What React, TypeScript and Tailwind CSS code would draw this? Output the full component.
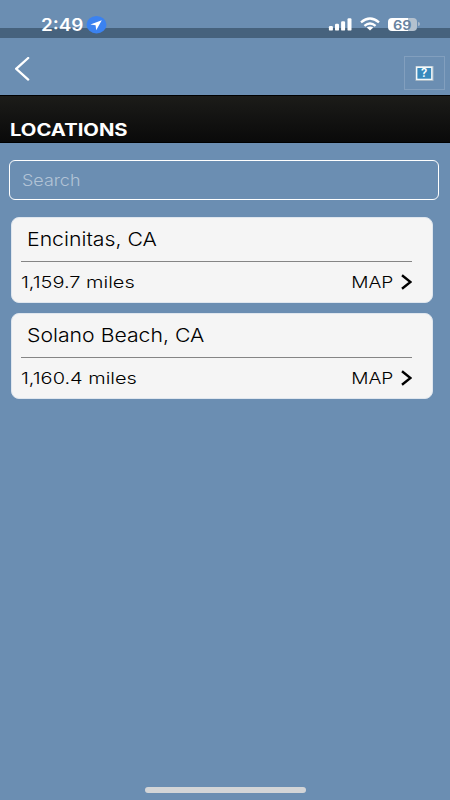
const locations = [
  { name: "Encinitas, CA", distance: "1,159.7 miles" },
  { name: "Solano Beach, CA", distance: "1,160.4 miles" },
];

function StatusBar() {
  return (
    <div className="flex h-[38px] items-start justify-between bg-[linear-gradient(to_bottom,#6b8eb2_28px,#46627d_28px)] pr-[30px] pl-[41px]">
      <div className="flex pt-[15px]">
        <span className="w-[45px] origin-left scale-x-[1.11] text-[17px] leading-[20px] font-semibold text-white">
          2:49
        </span>
        <svg width="21" height="18" viewBox="0 0 21 18" className="mt-px">
          <ellipse cx="10.5" cy="8.7" rx="10" ry="8.7" fill="#3b82f0" />
          <path d="M15.8 4.2 4.4 8.6l5.2.7.6 5z" fill="#fff" />
        </svg>
      </div>

      <div className="flex pt-[17px]">
        <svg width="24" height="14" viewBox="0 0 24 14" fill="#fff">
          <rect x="0.9" y="9" width="4" height="4.6" rx="1.2" />
          <rect x="7" y="6.7" width="4" height="6.9" rx="1.2" />
          <rect x="13.1" y="4.2" width="4" height="9.4" rx="1.2" />
          <rect x="19.5" y="1.3" width="4" height="12.3" rx="1.2" />
        </svg>
        <svg width="20" height="14" viewBox="0 0 20 14" className="ml-[8px]" fill="none" stroke="#fff" strokeWidth="2.3">
          <path d="M1 5.3Q10-2.4 19 5.3" />
          <path d="M4.4 8.9Q10 4 15.6 8.9" />
          <path d="M10 13.5 6.7 10.6Q10 8.2 13.3 10.6z" fill="#fff" stroke="none" />
        </svg>
        <div className="ml-[8px] mt-px flex h-[13px] w-[29px] items-center justify-center rounded-[4px] bg-[linear-gradient(to_right,#fff_20px,#b4c1ce_20px)]">
          <span className="pt-px scale-x-[1.12] text-[13px] leading-[13px] font-semibold text-[#68829f]">69</span>
        </div>
        <div className="mt-[5px] ml-px h-[4px] w-[2px] rounded-r-full bg-[#a9b9ca]" />
      </div>
    </div>
  );
}

function LocationCard({ name, distance }: { name: string; distance: string }) {
  return (
    <div className="h-[86px] rounded-[8px] border border-[#dfe6ee] bg-[#f5f5f5] pr-[20px] pl-[9px] text-black">
      <div className="h-[44px] border-b border-[#858585] pt-[10px] pl-[6px]">
        <span className="inline-block origin-left scale-x-[1.117] text-[19px] leading-[24px] font-light whitespace-nowrap">
          {name}
        </span>
      </div>
      <div className="flex h-[40px] items-center justify-between">
        <span className="inline-block origin-left scale-x-[1.21] text-[16.5px] font-light whitespace-nowrap">
          {distance}
        </span>
        <div className="flex items-center">
          <span className="mr-[8px] origin-right scale-x-[1.16] text-[16.5px] font-light">MAP</span>
          <svg width="11" height="16" viewBox="0 0 11 16" fill="none" stroke="#000" strokeWidth="2.4">
            <path d="M1 1.2 9.5 8 1 14.8" />
          </svg>
        </div>
      </div>
    </div>
  );
}

function App() {
  return (
    <div className="flex h-[800px] w-[450px] flex-col overflow-hidden bg-[#6b8eb2] font-['Inter',sans-serif]">
      <StatusBar />

      {/* Nav bar */}
      <div className="flex h-[57px] justify-between pr-[5px] pl-[15px]">
        <svg width="15" height="24" viewBox="0 0 15 24" className="mt-[19px]" fill="none" stroke="#fff" strokeWidth="2.3" strokeLinecap="round">
          <path d="M13.2 1 1.2 11.8 13.2 22.6" />
        </svg>
        <div className="mt-[18px] flex h-[34px] w-[41px] items-center justify-center border border-[#829fbe]">
          <svg width="19" height="15" viewBox="0 0 19 15">
            <rect x="0.5" width="18" height="15" fill="#a9b9c5" />
            <rect x="1" y="0.5" width="16.5" height="13.5" fill="#f3f8fa" />
            <rect x="2.4" y="2" width="13.7" height="10.7" fill="#398abd" />
            <text x="9.2" y="11.3" textAnchor="middle" fontSize="11.5" fontWeight="600" fill="#fff">
              ?
            </text>
          </svg>
        </div>
      </div>

      {/* Title */}
      <div className="h-[48px] border-y border-black bg-linear-to-b from-[#1c1c19] to-[#0a0a0a] pt-[23px] pl-[10px]">
        <h1 className="w-fit origin-left scale-x-[1.19] text-[17px] leading-[22px] font-bold text-white">
          LOCATIONS
        </h1>
      </div>

      {/* Search */}
      <div className="mt-[17px] mr-[11px] ml-[9px] flex h-[40px] items-center rounded-[6px] border border-white pl-[12px]">
        <span className="origin-left scale-x-[1.12] text-[16px] font-light text-[#b2c3d6]">Search</span>
      </div>

      {/* Results */}
      <div className="mt-[17px] mr-[17px] ml-[11px] flex flex-col gap-[10px]">
        {locations.map((location) => (
          <LocationCard key={location.name} {...location} />
        ))}
      </div>

      <div className="mt-auto mb-[7px] h-[6px] w-[161px] self-center rounded-full bg-[#d3d5d7]" />
    </div>
  );
}

export default App;
